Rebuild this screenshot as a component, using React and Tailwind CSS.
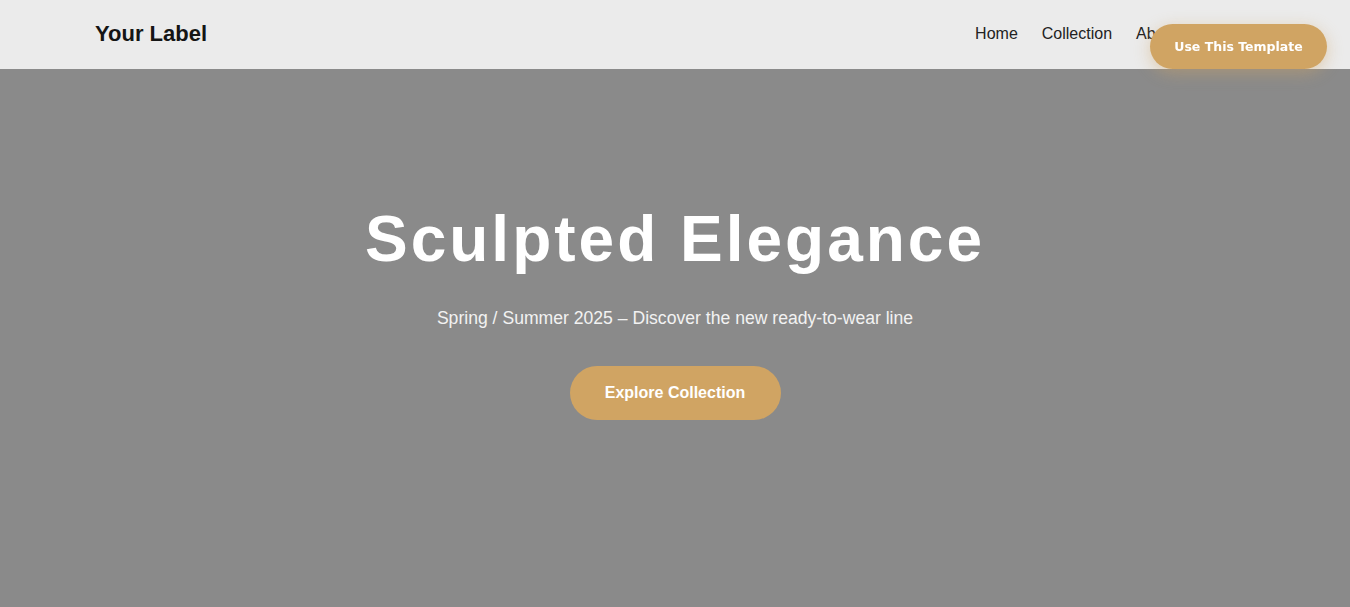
import React from "react";

const navLinks = ["Home", "Collection", "About", "Contact"];

function Header() {
  return (
    <header className="h-[69px] bg-[#ebebeb]">
      <div className="mx-auto flex h-full max-w-[1160px] items-center justify-between pb-[2px]">
        <div className="text-[22px] font-bold text-[#151515]">Your Label</div>
        <nav className="-mr-[2px] flex items-center gap-6 text-base text-[#222]">
          {navLinks.map((l) => (
            <a key={l} href="#" className="leading-6">
              {l}
            </a>
          ))}
        </nav>
      </div>
    </header>
  );
}

function Hero() {
  return (
    <section className="flex h-[538px] flex-col items-center bg-[#8a8a8a] pt-[132px] text-center">
      <h1 className="text-[64px] font-bold leading-[1.2] tracking-[3px] text-white">
        Sculpted Elegance
      </h1>
      <p className="mt-[27px] text-[17.6px] leading-[27px] text-[#f2f2f2]">
        Spring / Summer 2025 – Discover the new ready-to-wear line
      </p>
      <a
        href="#"
        className="mt-[34px] flex h-[54px] w-[211px] items-center justify-center rounded-full bg-[#d0a463] text-base font-bold text-white"
      >
        Explore Collection
      </a>
    </section>
  );
}

export default function App() {
  return (
    <div className="min-h-[607px] bg-[#8a8a8a] font-['Liberation_Sans',Arial,sans-serif]">
      <Header />
      <Hero />
      <a
        href="#"
        className="fixed right-[23px] top-[24px] flex h-[45px] w-[177px] items-center justify-center rounded-full bg-[#d0a463] pt-[2px] font-['DejaVu_Sans',sans-serif] text-[12.5px] font-bold text-white shadow-[0_4px_16px_rgba(208,164,99,0.45)]"
      >
        Use This Template
      </a>
    </div>
  );
}
